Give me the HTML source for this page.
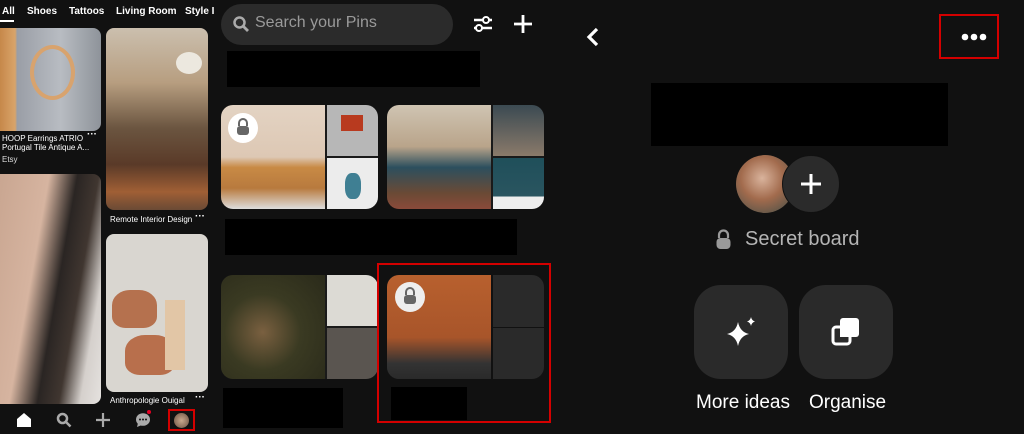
<!DOCTYPE html>
<html><head><style>
*{margin:0;padding:0;box-sizing:border-box}
html,body{background:#111}
body{width:1024px;height:434px;position:relative;overflow:hidden;font-family:"Liberation Sans",sans-serif;color:#fff}
.a{position:absolute}
.t{font-size:8px;font-weight:bold;white-space:nowrap}
.blk{position:absolute;background:#000}
.dots{font-size:10px;font-weight:bold}
</style></head><body>
<!-- left panel -->
<div class="a" style="left:2px;top:6px;font-size:10px;font-weight:bold">All</div>
<div class="a" style="left:0;top:20px;width:14px;height:2px;background:#fff"></div>
<div class="a" style="left:27px;top:6px;font-size:10px;font-weight:bold">Shoes</div>
<div class="a" style="left:69px;top:6px;font-size:10px;font-weight:bold">Tattoos</div>
<div class="a" style="left:116px;top:6px;font-size:10px;font-weight:bold">Living Room</div>
<div class="a" style="left:185px;top:6px;font-size:10px;font-weight:bold">Style I</div>

<div class="a" style="left:0;top:28px;width:101px;height:103px;border-radius:0 8px 8px 0;background:linear-gradient(90deg,#c6884a 0,#d9a46a 15%,#9a9ea6 17%,#b8bcc2 60%,#8e939a 100%)"></div>
<div class="a" style="left:30px;top:45px;width:45px;height:55px;border:4px solid #d8a36e;border-radius:50%"></div>
<div class="a t" style="left:2px;top:134px;font-weight:normal">HOOP Earrings ATRIO</div>
<div class="a t" style="left:2px;top:143px;font-weight:normal">Portugal Tile Antique A...</div>
<div class="a" style="left:2px;top:155px;font-size:8px;color:#ddd">Etsy</div>
<div class="a dots" style="left:87px;top:129px">···</div>

<div class="a" style="left:106px;top:28px;width:102px;height:182px;border-radius:8px;background:linear-gradient(180deg,#cbbfae 0,#b79e80 30%,#6b5540 55%,#5a3a28 75%,#a05f35 90%,#6a4a35 100%)"></div>
<div class="a" style="left:176px;top:52px;width:26px;height:22px;border-radius:50%;background:#ece8df"></div>
<div class="a t" style="left:110px;top:215px;font-weight:normal">Remote Interior Design</div>
<div class="a dots" style="left:195px;top:211px">···</div>

<div class="a" style="left:0;top:174px;width:101px;height:230px;border-radius:0 8px 8px 0;background:linear-gradient(100deg,#c9a691 0,#d6b4a0 35%,#2a2523 55%,#403630 70%,#d5d0cc 85%,#e5e2df 100%)"></div>

<div class="a" style="left:106px;top:234px;width:102px;height:158px;border-radius:8px;background:#d9d6d0"></div>
<div class="a" style="left:112px;top:290px;width:45px;height:38px;border-radius:40% 40% 30% 30%;background:#b5714e"></div>
<div class="a" style="left:125px;top:335px;width:50px;height:40px;border-radius:40% 40% 30% 30%;background:#b86f4c"></div>
<div class="a" style="left:165px;top:300px;width:20px;height:70px;background:#e2c6a6"></div>
<div class="a t" style="left:110px;top:396px;font-weight:normal">Anthropologie Ouigal</div>
<div class="a dots" style="left:195px;top:392px">···</div>

<!-- nav -->
<svg class="a" style="left:16px;top:412px" width="16" height="16" viewBox="0 0 16 16"><path d="M1 7L8 1l7 6v8H1z" fill="#fff"/></svg>
<svg class="a" style="left:56px;top:412px" width="16" height="16" viewBox="0 0 16 16"><circle cx="6.5" cy="6.5" r="4.5" stroke="#aaa" stroke-width="2.5" fill="none"/><path d="M10 10l4.5 4.5" stroke="#aaa" stroke-width="2.5"/></svg>
<svg class="a" style="left:95px;top:412px" width="16" height="16" viewBox="0 0 16 16"><path d="M8 1v14M1 8h14" stroke="#aaa" stroke-width="2.2"/></svg>
<svg class="a" style="left:135px;top:412px" width="16" height="16" viewBox="0 0 16 16"><ellipse cx="8" cy="7.5" rx="7" ry="6.3" fill="#aaa"/><path d="M3 11l-1 4 5-2z" fill="#aaa"/><circle cx="5" cy="7.5" r="1" fill="#111"/><circle cx="8" cy="7.5" r="1" fill="#111"/><circle cx="11" cy="7.5" r="1" fill="#111"/></svg>
<div class="a" style="left:147px;top:410px;width:4px;height:4px;border-radius:50%;background:#e60023"></div>
<div class="a" style="left:168px;top:409px;width:27px;height:22px;border:2px solid #d40000"></div>
<div class="a" style="left:174px;top:413px;width:15px;height:15px;border-radius:50%;background:radial-gradient(#c9a98e,#6a5040)"></div>

<!-- middle -->
<div class="a" style="left:221px;top:4px;width:232px;height:41px;border-radius:21px;background:#2b2b2b"></div>
<svg class="a" style="left:232px;top:15px" width="18" height="18" viewBox="0 0 18 18"><circle cx="7.5" cy="7.5" r="5" stroke="#aaa" stroke-width="2.5" fill="none"/><path d="M11 11l5 5" stroke="#aaa" stroke-width="2.8"/></svg>
<div class="a" style="left:255px;top:14px;font-size:16px;color:#9a9a9a">Search your Pins</div>
<svg class="a" style="left:472px;top:13px" width="22" height="22" viewBox="0 0 22 22"><path d="M2 7h18M2 15h18" stroke="#fff" stroke-width="2.5"/><circle cx="14" cy="7" r="3" fill="#111" stroke="#fff" stroke-width="2"/><circle cx="7" cy="15" r="3" fill="#111" stroke="#fff" stroke-width="2"/></svg>
<svg class="a" style="left:513px;top:14px" width="20" height="20" viewBox="0 0 20 20"><path d="M10 1v18M1 10h18" stroke="#fff" stroke-width="2.8"/></svg>
<div class="blk" style="left:227px;top:51px;width:253px;height:36px"></div>

<div class="a" style="left:221px;top:105px;width:157px;height:104px;border-radius:12px;overflow:hidden;background:#1a1a1a">
 <div class="a" style="left:0;top:0;width:104px;height:104px;background:linear-gradient(180deg,#e3d3c3 0,#ddc8b4 50%,#c88a45 60%,#b87a3e 80%,#ddd 100%)"></div>
 <div class="a" style="left:106px;top:0;width:51px;height:51px;background:#b7b7b7"></div>
 <div class="a" style="left:106px;top:53px;width:51px;height:51px;background:#ececec"></div>
 <div class="a" style="left:124px;top:68px;width:16px;height:26px;border-radius:40%;background:#3f7f93"></div>
 <div class="a" style="left:120px;top:10px;width:22px;height:16px;background:#b83a1f"></div>
 <div class="a" style="left:7px;top:8px;width:30px;height:30px;border-radius:50%;background:#fff"></div>
 <svg class="a" style="left:14px;top:13px" width="16" height="18" viewBox="0 0 16 18"><path d="M4 8V5a4 4 0 0 1 8 0v3" stroke="#666" stroke-width="2" fill="none"/><rect x="2" y="8" width="12" height="9" rx="3" fill="#666"/></svg>
</div>
<div class="a" style="left:387px;top:105px;width:157px;height:104px;border-radius:12px;overflow:hidden;background:#1a1a1a">
 <div class="a" style="left:0;top:0;width:104px;height:104px;background:linear-gradient(180deg,#cfc4b2 0,#b9a48a 40%,#2c4f5e 60%,#6b4a35 85%,#8a4a3a 100%)"></div>
 <div class="a" style="left:106px;top:0;width:51px;height:51px;background:linear-gradient(#3b4a52,#8a7a6a)"></div>
 <div class="a" style="left:106px;top:53px;width:51px;height:51px;background:linear-gradient(#1f4f5a,#2a5560 75%,#eee 76%)"></div>
</div>
<div class="blk" style="left:225px;top:219px;width:292px;height:36px"></div>

<div class="a" style="left:221px;top:275px;width:157px;height:104px;border-radius:12px;overflow:hidden;background:#1a1a1a">
 <div class="a" style="left:0;top:0;width:104px;height:104px;background:radial-gradient(circle at 40% 55%,#7a6040 0,#3a3a22 45%,#2a2a1a 100%)"></div>
 <div class="a" style="left:106px;top:0;width:51px;height:51px;background:#dcdad4"></div>
 <div class="a" style="left:106px;top:53px;width:51px;height:51px;background:#5a5550"></div>
</div>
<div class="a" style="left:387px;top:275px;width:157px;height:104px;border-radius:12px;overflow:hidden;background:#2a2a2a">
 <div class="a" style="left:0;top:0;width:104px;height:104px;background:linear-gradient(180deg,#b8602e 0,#a8552a 60%,#333 85%,#2a2a2a 100%)"></div>
 <div class="a" style="left:105px;top:52px;width:52px;height:1px;background:#111"></div>
 <div class="a" style="left:104px;top:0;width:2px;height:104px;background:#111"></div>
 <div class="a" style="left:8px;top:7px;width:30px;height:30px;border-radius:50%;background:#eee"></div>
 <svg class="a" style="left:15px;top:12px" width="16" height="18" viewBox="0 0 16 18"><path d="M4 8V5a4 4 0 0 1 8 0v3" stroke="#666" stroke-width="2" fill="none"/><rect x="2" y="8" width="12" height="9" rx="3" fill="#666"/></svg>
</div>
<div class="a" style="left:377px;top:263px;width:174px;height:160px;border:2px solid #d40000"></div>
<div class="blk" style="left:223px;top:388px;width:120px;height:40px"></div>
<div class="blk" style="left:391px;top:387px;width:76px;height:33px"></div>

<!-- right -->
<svg class="a" style="left:584px;top:26px" width="18" height="22" viewBox="0 0 18 22"><path d="M13 3L5 11l8 8" stroke="#fff" stroke-width="3.2" fill="none"/></svg>
<div class="a" style="left:939px;top:14px;width:60px;height:45px;border:2px solid #d40000"></div>
<svg class="a" style="left:960px;top:32px" width="30" height="10" viewBox="0 0 30 10"><circle cx="5" cy="5" r="3.3" fill="#fff"/><circle cx="14" cy="5" r="3.3" fill="#fff"/><circle cx="23" cy="5" r="3.3" fill="#fff"/></svg>
<div class="blk" style="left:651px;top:83px;width:297px;height:63px"></div>
<div class="a" style="left:736px;top:155px;width:58px;height:58px;border-radius:50%;background:radial-gradient(circle at 45% 40%,#d9b39c 0,#a26b4d 45%,#6a5a4a 75%,#999 100%)"></div>
<div class="a" style="left:782px;top:155px;width:58px;height:58px;border-radius:50%;background:#2b2b2b;border:1px solid #111"></div>
<svg class="a" style="left:799px;top:172px" width="24" height="24" viewBox="0 0 24 24"><path d="M12 2v20M2 12h20" stroke="#fff" stroke-width="3"/></svg>
<svg class="a" style="left:715px;top:229px" width="17" height="21" viewBox="0 0 17 21"><path d="M4 9V6a4.5 4.5 0 0 1 9 0v3" stroke="#999" stroke-width="2.2" fill="none"/><rect x="1.5" y="9" width="14" height="11" rx="4" fill="#999"/></svg>
<div class="a" style="left:745px;top:228px;font-size:20px;color:#b5b5b5">Secret board</div>
<div class="a" style="left:694px;top:285px;width:94px;height:94px;border-radius:27px;background:#2a2a2a"></div>
<div class="a" style="left:799px;top:285px;width:94px;height:94px;border-radius:27px;background:#2a2a2a"></div>
<svg class="a" style="left:722px;top:312px" width="36" height="36" viewBox="0 0 36 36"><path d="M16 10Q18 20 27 22Q18 24 16 34Q14 24 5 22Q14 20 16 10z" fill="#fff"/><path d="M29 5Q29.7 8.5 33 9.5Q29.7 10.5 29 14Q28.3 10.5 25 9.5Q28.3 8.5 29 5z" fill="#fff"/></svg>
<svg class="a" style="left:829px;top:314px" width="34" height="34" viewBox="0 0 34 34"><rect x="11" y="4" width="19" height="19" rx="3" fill="#fff"/><rect x="4" y="13" width="17" height="17" rx="3" fill="#2a2a2a" stroke="#fff" stroke-width="3"/><rect x="11" y="13" width="10" height="10" fill="#fff"/></svg>
<div class="a" style="left:696px;top:392px;font-size:19px">More ideas</div>
<div class="a" style="left:809px;top:392px;font-size:19px">Organise</div>
</body></html>
